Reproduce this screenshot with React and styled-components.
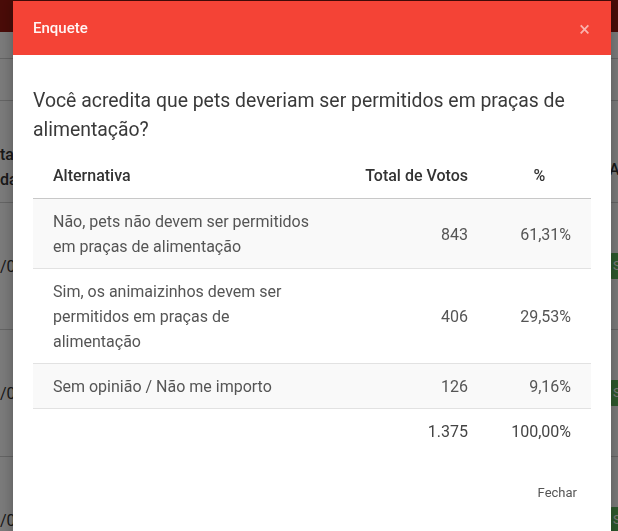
import styled, { createGlobalStyle } from "styled-components";

const Global = createGlobalStyle`
    html, body {
        margin: 0;
        padding: 0;
        overflow: hidden;
        background: #fff;
        font-family: Roboto, "Liberation Sans", sans-serif;
    }
`

const rows = [
    { alt: "Não, pets não devem ser permitidos em praças de alimentação", votos: "843", pct: "61,31%" },
    { alt: "Sim, os animaizinhos devem ser permitidos em praças de alimentação", votos: "406", pct: "29,53%" },
    { alt: "Sem opinião / Não me importo", votos: "126", pct: "9,16%" },
]

const bgRows = ["/06/2020", "/05/2020", "/04/2020"]

export default function App() {
    return (
        <>
            <Global />
            <Page>
                <TopBar />
                <Toolbar />
                <Filters />
                <BgHead>
                    <BgLeft>tal<br />dade</BgLeft>
                    <BgRight $lift>Ativo</BgRight>
                </BgHead>
                {bgRows.map((d) => (
                    <BgRow key={d}>
                        <BgLeft>{d}</BgLeft>
                        <BgRight><Badge>Sim</Badge></BgRight>
                    </BgRow>
                ))}
            </Page>
            <Backdrop />
            <Modal>
                <Header>
                    <h1>Enquete</h1>
                    <Close>×</Close>
                </Header>
                <Body>
                    <Question>Você acredita que pets deveriam ser permitidos em praças de alimentação?</Question>
                    <Table>
                        <thead>
                            <tr>
                                <Th $width="260px">Alternativa</Th>
                                <Th $align="right">Total de Votos</Th>
                                <Th $align="center" $width="63px">%</Th>
                            </tr>
                        </thead>
                        <tbody>
                            {rows.map((r, i) => (
                                <Tr key={r.alt} $striped={i % 2 === 0}>
                                    <Td>{r.alt}</Td>
                                    <Td $align="right">{r.votos}</Td>
                                    <Td $align="right">{r.pct}</Td>
                                </Tr>
                            ))}
                        </tbody>
                        <tfoot>
                            <tr>
                                <Td />
                                <Td $align="right">1.375</Td>
                                <Td $align="right">100,00%</Td>
                            </tr>
                        </tfoot>
                    </Table>
                </Body>
                <Footer>
                    <FlatButton>Fechar</FlatButton>
                </Footer>
            </Modal>
        </>
    )
}

const Page = styled.div`
    width: 618px;
    height: 531px;
    display: flex;
    flex-direction: column;
    font-size: 16px;
    color: #333;
    > * {
        flex-shrink: 0;
    }
`

const TopBar = styled.div`
    height: 32px;
    background-color: #9a1911;
`

const Toolbar = styled.div`
    height: 26px;
    border-bottom: 1px solid #d0d0d0;
`

const Filters = styled.div`
    height: 41px;
    border-bottom: 1px solid #d0d0d0;
`

const BgHead = styled.div`
    height: 102px;
    border-bottom: 1px solid #d0d0d0;
    display: flex;
    align-items: flex-end;
    justify-content: space-between;
    padding-bottom: 10px;
    box-sizing: border-box;
    font-weight: 500;
    line-height: 25px;
`

const BgRow = styled.div`
    height: 126px;
    border-bottom: 1px solid #d0d0d0;
    display: flex;
    align-items: center;
    justify-content: space-between;
`

const BgLeft = styled.div`
    white-space: nowrap;
`

const BgRight = styled.div`
    width: 9px;
    white-space: nowrap;
    margin-bottom: ${(p) => (p.$lift ? "10px" : "0")};
`

const Badge = styled.span`
    display: inline-block;
    background-color: #5cb85c;
    color: #fff;
    font-size: 13px;
    line-height: 26px;
    padding: 0 3px;
    margin-left: 1px;
    border-radius: 2px;
`

const Backdrop = styled.div`
    position: fixed;
    inset: 0;
    background-color: rgba(0, 0, 0, 0.52);
`

const Modal = styled.div`
    position: fixed;
    top: 1px;
    left: 13px;
    width: 598px;
    height: 540px;
    background-color: #fff;
    box-shadow: 0 0 12px rgba(0, 0, 0, 0.3);
    display: flex;
    flex-direction: column;
`

const Header = styled.div`
    height: 54px;
    background-color: #f44336;
    display: flex;
    align-items: center;
    justify-content: space-between;
    padding: 0 20px;
    box-sizing: border-box;
    h1 {
        margin: 0 0 1px;
        font-size: 15px;
        font-weight: 500;
        color: rgba(255, 255, 255, 0.95);
    }
`

const Close = styled.span`
    font-size: 20px;
    line-height: 20px;
    color: rgba(255, 255, 255, 0.6);
    margin-right: 1px;
    margin-top: 2px;
`

const Body = styled.div`
    padding: 31px 20px 20px;
`

const Question = styled.p`
    margin: 0 0 9px;
    font-size: 19.4px;
    line-height: 29px;
    color: #3a3a3a;
`

const Table = styled.table`
    width: 100%;
    border-collapse: collapse;
    font-size: 16px;
    line-height: 25px;
    color: #555;
    tbody td {
        padding-bottom: 9px;
    }
    tfoot td {
        border-top: 1px solid #c8c8c8;
        border-bottom: none;
        color: #444;
    }
`

const Th = styled.th`
    text-align: ${(p) => p.$align || "left"};
    width: ${(p) => p.$width || "auto"};
    font-weight: 500;
    color: #333;
    padding: 10px 20px;
    border-bottom: 1px solid #c8c8c8;
`

const Tr = styled.tr`
    background-color: ${(p) => (p.$striped ? "#f9f9f9" : "#fff")};
`

const Td = styled.td`
    text-align: ${(p) => p.$align || "left"};
    padding: 10px 20px;
    border-bottom: 1px solid #e2e2e2;
`

const Footer = styled.div`
    display: flex;
    justify-content: flex-end;
    padding: 0 20px;
`

const FlatButton = styled.button`
    font-family: Roboto, "Liberation Sans", sans-serif;
    font-size: 13px;
    color: #555;
    background: none;
    border: none;
    height: 36px;
    padding: 0 14px;
`
